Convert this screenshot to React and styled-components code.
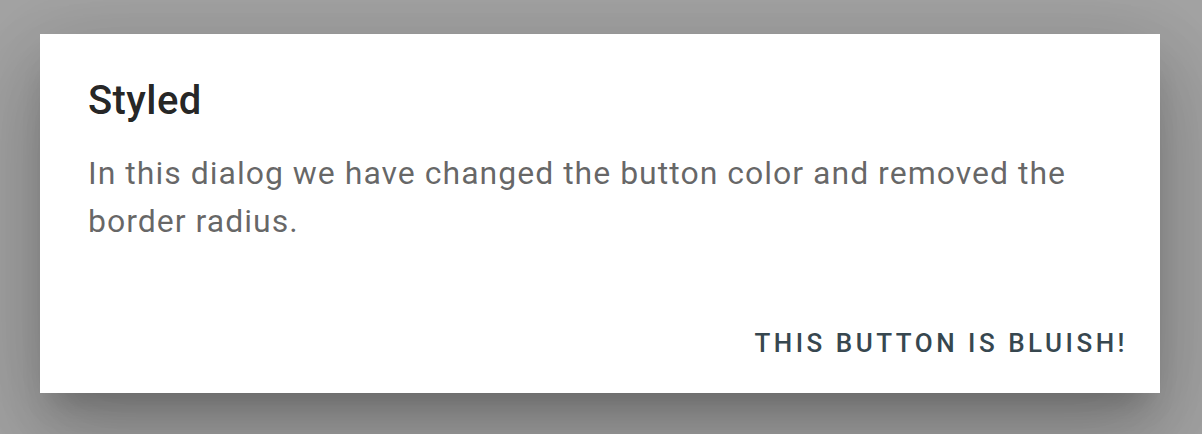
import React from "react";
import styled, { createGlobalStyle } from "styled-components";

const Global = createGlobalStyle`
  html, body { margin: 0; padding: 0; }
  body { background: #a4a4a4; font-family: Roboto, "Noto Sans", sans-serif; }
`;

const Backdrop = styled.div`
  width: 1202px;
  height: 434px;
  box-sizing: border-box;
  padding: 34px 0 0 40px;
  display: flex;
  justify-content: flex-start;
  align-items: flex-start;
  background: #a4a4a4;
`;

const Dialog = styled.div`
  width: 1120px;
  height: 359px;
  box-sizing: border-box;
  background: #fff;
  display: flex;
  flex-direction: column;
  box-shadow: 0 22px 30px -14px rgba(0,0,0,0.2), 0 48px 76px 6px rgba(0,0,0,0.14), 0 18px 92px 16px rgba(0,0,0,0.12);
`;

const Title = styled.h2`
  margin: 0;
  padding: 35px 48px 0 48px;
  font-family: Roboto, sans-serif;
  font-weight: 500;
  font-size: 40px;
  line-height: 64px;
  letter-spacing: 0.4px;
  color: rgba(0,0,0,0.87);
`;

const Content = styled.p`
  margin: 0;
  padding: 16px 48px 0 48px;
  font-family: Roboto, sans-serif;
  font-weight: 400;
  font-size: 32px;
  line-height: 48px;
  letter-spacing: 1px;
  color: rgba(0,0,0,0.6);
`;

const Actions = styled.div`
  margin-top: auto;
  display: flex;
  justify-content: flex-end;
  padding: 0 16px 20px;
`;

const Button = styled.button`
  border: none;
  border-radius: 0;
  background: transparent;
  padding: 12px 16px 12px 18px;
  font-family: Roboto, sans-serif;
  font-weight: 500;
  font-size: 26px;
  line-height: 36px;
  letter-spacing: 3.5px;
  text-transform: uppercase;
  color: #37474f;
  cursor: pointer;
`;

export default function App() {
  return (
    <>
      <Global />
      <Backdrop>
        <Dialog>
          <Title>Styled</Title>
          <Content>
            In this dialog we have changed the button color and removed the border radius.
          </Content>
          <Actions>
            <Button>This button is bluish!</Button>
          </Actions>
        </Dialog>
      </Backdrop>
    </>
  );
}
